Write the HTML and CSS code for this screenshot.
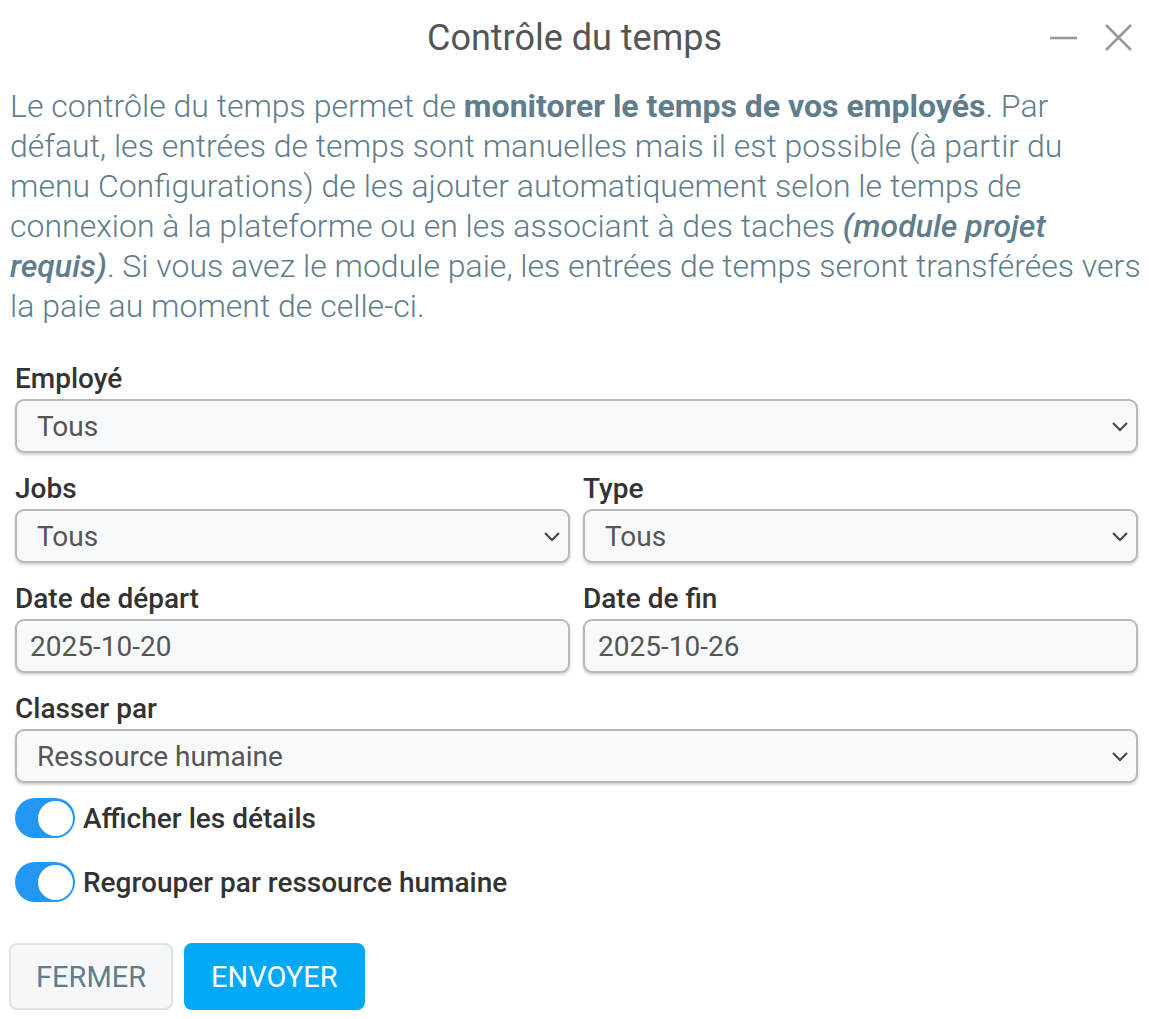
FILE: index.html
```html
<!DOCTYPE html>
<html lang="fr">
<head>
  <meta charset="utf-8">
  <title>Contrôle du temps</title>
  <link rel="stylesheet" href="styles.css">
</head>
<body>
  <div class="dialog">
    <div class="dialog-header">
      <span></span>
      <h1 class="dialog-title">Contrôle du temps</h1>
      <div class="dialog-actions">
        <svg class="icon" width="30" height="30" viewBox="0 0 30 30"><path d="M2 15 H29" /></svg>
        <svg class="icon" width="30" height="30" viewBox="0 0 30 30"><path d="M3 2 L28 27 M28 2 L3 27" /></svg>
      </div>
    </div>

    <p class="intro">
      Le contrôle du temps permet de <strong>monitorer le temps de vos employés</strong>. Par défaut, les entrées de temps sont manuelles mais il est possible (à partir du menu Configurations) de les ajouter automatiquement selon le temps de connexion à la plateforme ou en les associant à des taches <em>(module projet requis)</em>. Si vous avez le module paie, les entrées de temps seront transférées vers la paie au moment de celle-ci.
    </p>

    <form class="form">
      <div class="field">
        <label for="employe">Employé</label>
        <div class="select-wrap">
          <select id="employe"><option>Tous</option></select>
          <svg class="chevron" width="16" height="10" viewBox="0 0 16 10"><path d="M1 1 L8 8 L15 1" /></svg>
        </div>
      </div>

      <div class="row">
        <div class="field">
          <label for="jobs">Jobs</label>
          <div class="select-wrap">
            <select id="jobs"><option>Tous</option></select>
            <svg class="chevron" width="16" height="10" viewBox="0 0 16 10"><path d="M1 1 L8 8 L15 1" /></svg>
          </div>
        </div>
        <div class="field">
          <label for="type">Type</label>
          <div class="select-wrap">
            <select id="type"><option>Tous</option></select>
            <svg class="chevron" width="16" height="10" viewBox="0 0 16 10"><path d="M1 1 L8 8 L15 1" /></svg>
          </div>
        </div>
      </div>

      <div class="row">
        <div class="field">
          <label for="debut">Date de départ</label>
          <input id="debut" class="input" type="text" value="2025-10-20">
        </div>
        <div class="field">
          <label for="fin">Date de fin</label>
          <input id="fin" class="input" type="text" value="2025-10-26">
        </div>
      </div>

      <div class="field">
        <label for="classer">Classer par</label>
        <div class="select-wrap">
          <select id="classer"><option>Ressource humaine</option></select>
          <svg class="chevron" width="16" height="10" viewBox="0 0 16 10"><path d="M1 1 L8 8 L15 1" /></svg>
        </div>
      </div>

      <div class="toggles">
        <label class="toggle">
          <span class="switch"><span class="knob"></span></span>
          <span>Afficher les détails</span>
        </label>
        <label class="toggle">
          <span class="switch"><span class="knob"></span></span>
          <span>Regrouper par ressource humaine</span>
        </label>
      </div>
    </form>

    <div class="buttons">
      <button class="btn btn-light" type="button">Fermer</button>
      <button class="btn btn-primary" type="button">Envoyer</button>
    </div>
  </div>
</body>
</html>
```

FILE: styles.css
```css
body {
  margin: 0;
  background-color: #ffffff;
  font-family: Roboto, "Liberation Sans", sans-serif;
  color: #333333;
}

.dialog {
  padding: 0 11px 0 10px;
}

.dialog-header {
  display: grid;
  grid-template-columns: 1fr auto 1fr;
  align-items: center;
  height: 76px;
  margin: 0 -11px 0 -10px;
  padding: 0 16px;
}

.dialog-title {
  margin: 0;
  font-size: 36px;
  font-weight: 400;
  color: #555555;
}

.dialog-actions {
  display: flex;
  justify-content: flex-end;
  gap: 25px;
}

.icon path {
  stroke: #999999;
  stroke-width: 2.6;
  fill: none;
}

.intro {
  margin: 10px -6px 0 0;
  font-size: 32px;
  line-height: 40px;
  font-weight: 300;
  color: #607d8b;
}

.intro strong {
  font-weight: 700;
}

.intro em {
  font-weight: 500;
}

.form {
  display: flex;
  flex-direction: column;
  gap: 20px;
  margin-top: 37px;
  padding-left: 5px;
}

.row {
  display: grid;
  grid-template-columns: 1fr 1fr;
  gap: 13px;
}

.field {
  display: flex;
  flex-direction: column;
  gap: 4px;
}

.field label {
  font-size: 28px;
  line-height: 32px;
  font-weight: 500;
  color: #333333;
}

.select-wrap {
  position: relative;
}

.field select,
.input {
  width: 100%;
  height: 54px;
  box-sizing: border-box;
  border: 2px solid #b8b8b8;
  border-radius: 9px;
  background-color: #f8f9fa;
  box-shadow: 0 2px 3px rgba(0, 0, 0, 0.18);
  font-family: inherit;
  font-size: 28px;
  color: #555555;
  outline: none;
}

.field select {
  appearance: none;
  padding: 0 40px 0 20px;
}

.input {
  padding: 0 13px;
}

.chevron {
  position: absolute;
  right: 10px;
  top: 23px;
  pointer-events: none;
}

.chevron path {
  stroke: #444444;
  stroke-width: 2;
  fill: none;
}

.toggles {
  display: flex;
  flex-direction: column;
  gap: 24px;
  margin-top: -5px;
}

.toggle {
  display: flex;
  align-items: center;
  gap: 8px;
  font-size: 28px;
  font-weight: 500;
  color: #333333;
}

.switch {
  display: flex;
  justify-content: flex-end;
  align-items: center;
  width: 60px;
  height: 40px;
  box-sizing: border-box;
  padding: 2px;
  border-radius: 20px;
  background-color: #2196f3;
}

.knob {
  width: 35px;
  height: 35px;
  border-radius: 50%;
  background-color: #ffffff;
}

.buttons {
  display: flex;
  gap: 11px;
  margin: 41px 0 0 -1px;
}

.btn {
  height: 67px;
  padding: 0 25px;
  border-radius: 8px;
  font-family: inherit;
  font-size: 29px;
  text-transform: uppercase;
  cursor: pointer;
}

.btn-light {
  background-color: #f5f7f9;
  border: 2px solid #dde3e6;
  color: #607d8b;
}

.btn-primary {
  background-color: #03a9f4;
  border: 2px solid #03a9f4;
  color: #ffffff;
}
```
